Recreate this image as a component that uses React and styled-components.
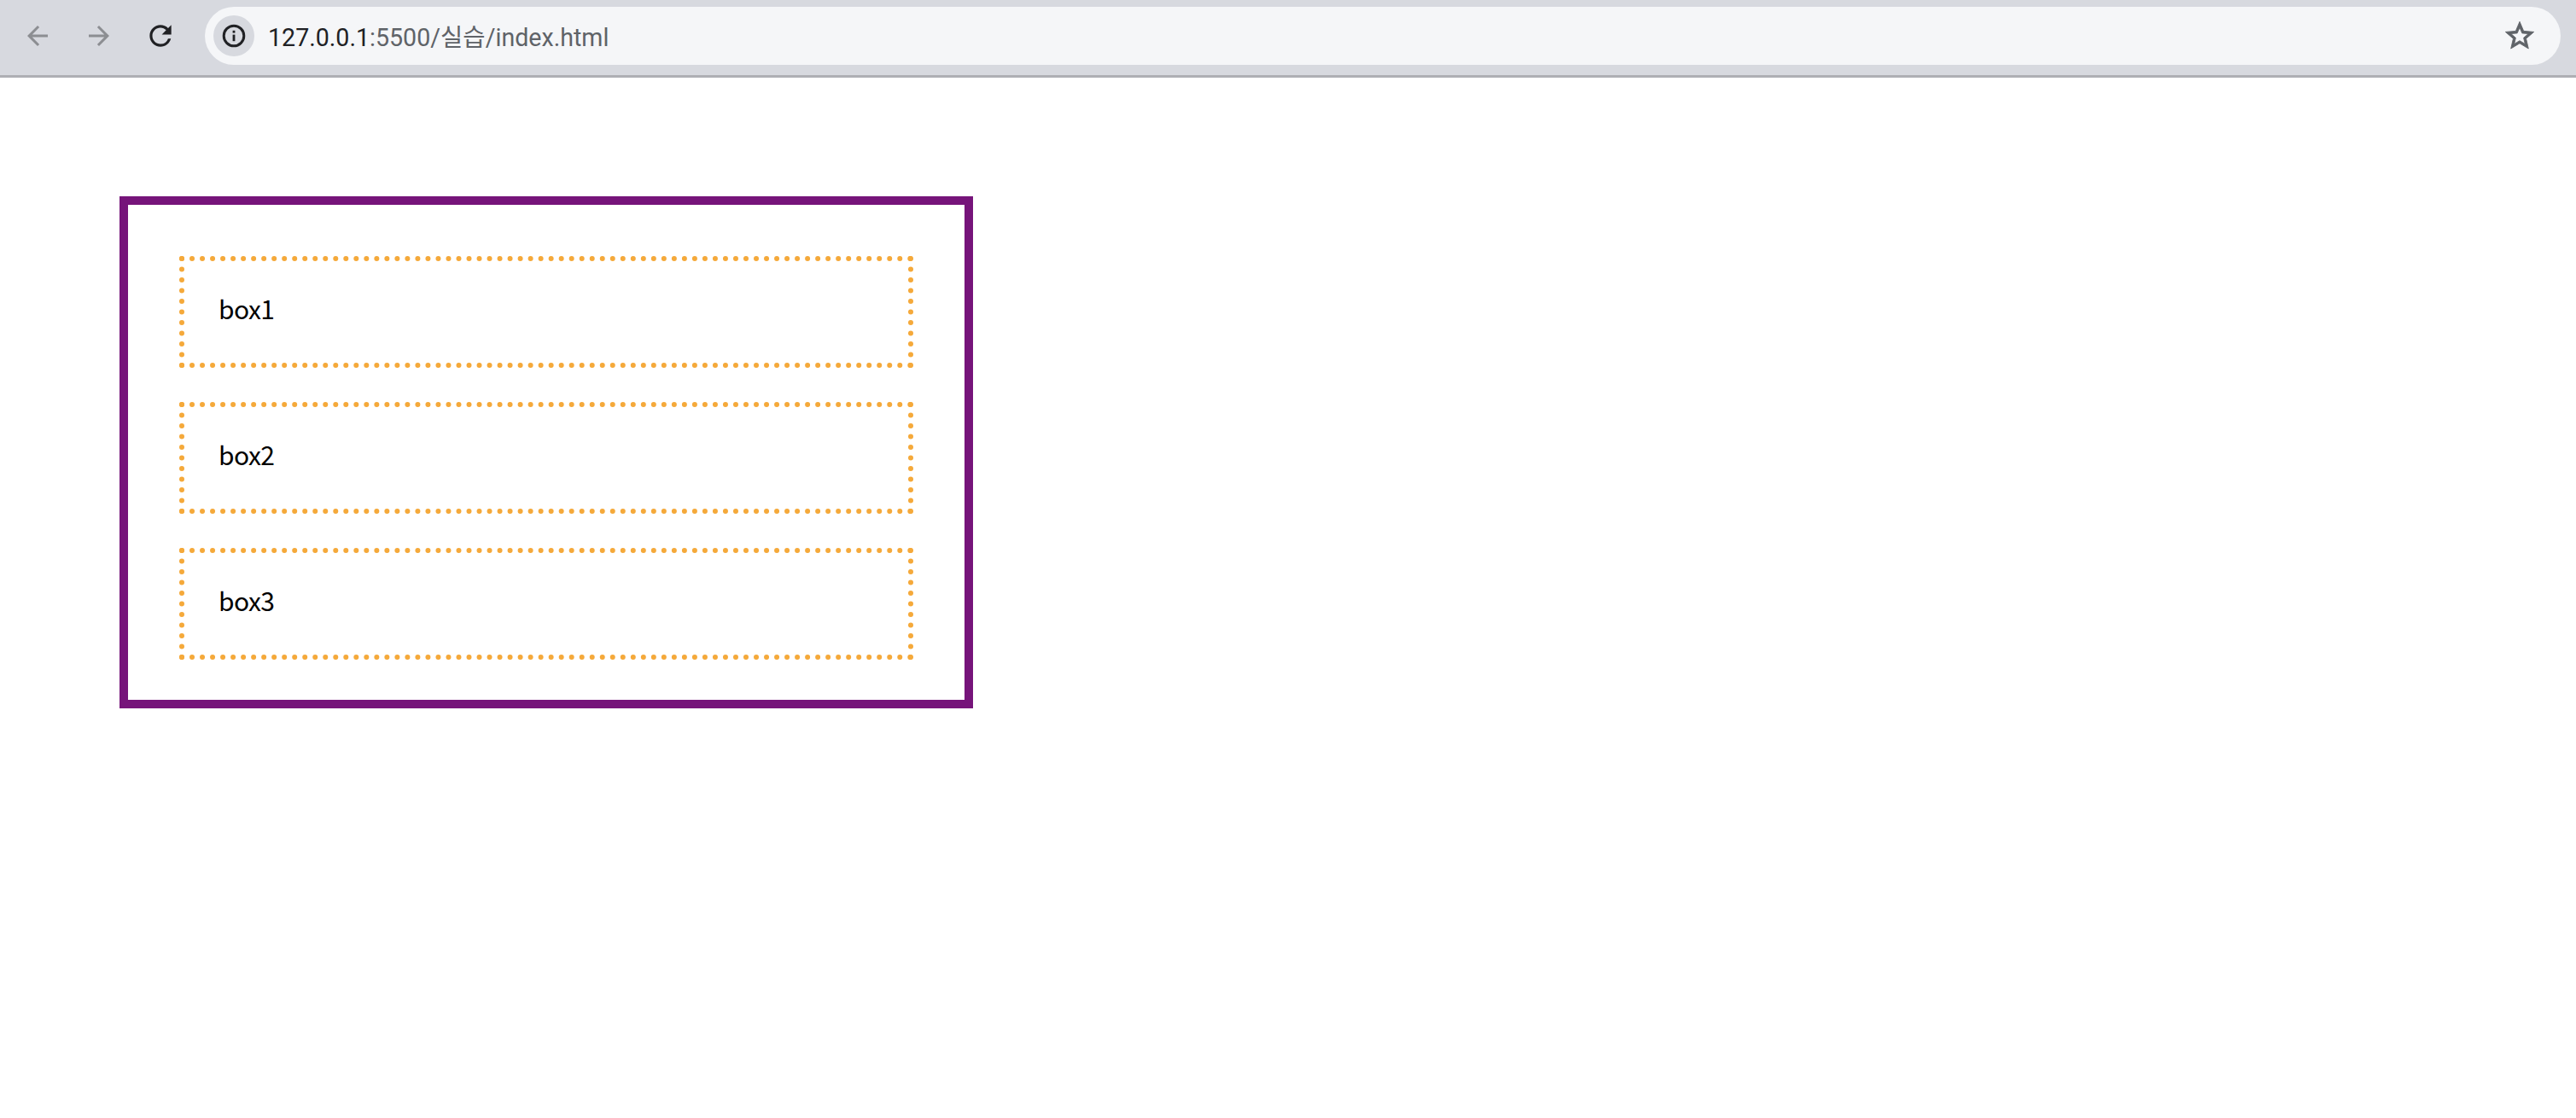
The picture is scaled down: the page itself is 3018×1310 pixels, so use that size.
import React from "react";
import styled, { createGlobalStyle } from "styled-components";
import { MdArrowBack, MdArrowForward, MdRefresh } from "react-icons/md";

const GlobalStyle = createGlobalStyle`
  html, body {
    margin: 0;
    padding: 0;
    background: #fff;
  }
`;

const Page = styled.div`
  width: 3018px;
  height: 1310px;
  overflow: hidden;
  display: flex;
  flex-direction: column;
  font-family: "Noto Sans CJK KR", "Noto Sans", sans-serif;
`;

const Toolbar = styled.header`
  box-sizing: border-box;
  height: 91px;
  flex: none;
  display: flex;
  align-items: center;
  padding: 0 18px 4px 8px;
  background: #d7d9df;
  border-bottom: 3px solid #aeafb4;
`;

const NavButton = styled.button`
  width: 72px;
  height: 50px;
  flex: none;
  padding: 0;
  border: 0;
  background: none;
  display: flex;
  align-items: center;
  justify-content: center;
  color: ${(p) => (p.$active ? "#202124" : "#8c8e92")};
`;

const Omnibox = styled.div`
  flex: 1;
  height: 68px;
  margin-left: 16px;
  padding: 0 28px 0 10px;
  display: flex;
  align-items: center;
  background: #f5f6f8;
  border-radius: 34px;
`;

const InfoChip = styled.div`
  width: 48px;
  height: 48px;
  flex: none;
  border-radius: 50%;
  background: #d7d9df;
  display: flex;
  align-items: center;
  justify-content: center;
`;

const Url = styled.div`
  flex: 1;
  margin: 0 0 2px 16px;
  font-family: "Roboto", "Noto Sans CJK KR", sans-serif;
  font-size: 28.6px;
  color: #5f6368;
`;

const Host = styled.span`
  color: #202124;
`;

const Content = styled.main`
  padding: 139px 0 0 140px;
`;

const Outer = styled.section`
  box-sizing: border-box;
  width: 1000px;
  height: 600px;
  padding: 60px;
  border: 10px solid #76147a;
`;

const Box = styled.div`
  box-sizing: border-box;
  height: 131px;
  margin-bottom: 40px;
  padding: 0 40px 10px;
  display: flex;
  align-items: center;
  border: 6px dotted #f5a93a;
  font-size: 30px;
  letter-spacing: -0.6px;
  color: #000;
`;

function InfoIcon() {
  return (
    <svg width="28" height="28" viewBox="0 0 28 28" fill="none">
      <circle cx="14" cy="14" r="11.8" stroke="#202124" strokeWidth="3" />
      <rect x="12.6" y="12.6" width="2.8" height="7.6" fill="#202124" />
      <rect x="12.6" y="7.8" width="2.8" height="2.8" fill="#202124" />
    </svg>
  );
}

function StarIcon() {
  return (
    <svg width="40" height="40" viewBox="0 0 24 24" fill="#5f6368" stroke="#5f6368" strokeWidth="0.5">
      <path d="M22 9.24l-7.19-.62L12 2 9.19 8.63 2 9.24l5.46 4.73L5.82 21 12 17.27 18.18 21l-1.63-7.03L22 9.24zM12 15.4l-3.76 2.27 1-4.28-3.32-2.88 4.38-.38L12 6.1l1.71 4.04 4.38.38-3.32 2.88 1 4.28L12 15.4z" />
    </svg>
  );
}

export default function App() {
  return (
    <>
      <GlobalStyle />
      <Page>
        <Toolbar>
          <NavButton>
            <MdArrowBack size={36} />
          </NavButton>
          <NavButton>
            <MdArrowForward size={36} />
          </NavButton>
          <NavButton $active>
            <MdRefresh size={38} />
          </NavButton>
          <Omnibox>
            <InfoChip>
              <InfoIcon />
            </InfoChip>
            <Url>
              <Host>127.0.0.1</Host>:5500/실습/index.html
            </Url>
            <StarIcon />
          </Omnibox>
        </Toolbar>
        <Content>
          <Outer>
            <Box>box1</Box>
            <Box>box2</Box>
            <Box>box3</Box>
          </Outer>
        </Content>
      </Page>
    </>
  );
}
